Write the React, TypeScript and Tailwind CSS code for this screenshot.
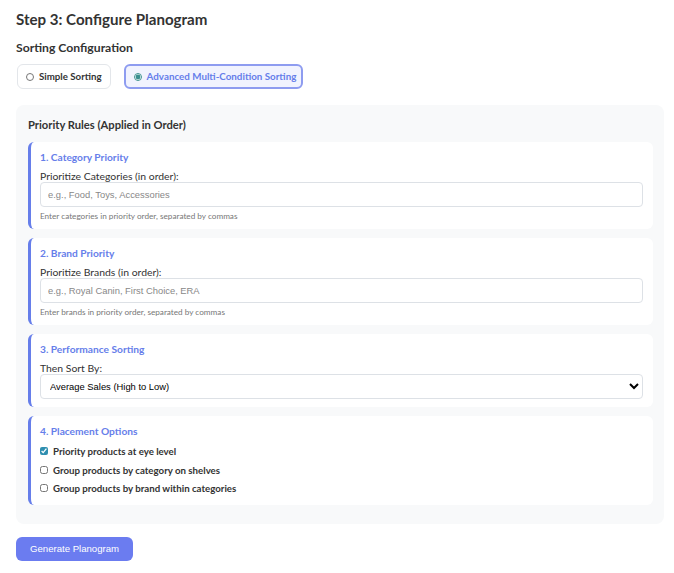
import { useState } from "react";

const sans = { fontFamily: 'Lato, "Open Sans", sans-serif' };
const arial = { fontFamily: '"Liberation Sans", Arial, sans-serif' };

function RuleCard({ title, children }: { title: string; children: React.ReactNode }) {
  return (
    <div className="bg-white rounded-md border-l-[3px] border-[#667eea] pl-[9px] pr-[10px] pt-[8px] pb-[8px]">
      <h4 className="text-[10.2px] font-bold text-[#667eea] leading-[14px] mb-[6px]">{title}</h4>
      {children}
    </div>
  );
}

function TextRule({ label, placeholder, hint }: { label: string; placeholder: string; hint: string }) {
  return (
    <>
      <label className="block text-[10.4px] text-[#333] leading-[12px]">{label}</label>
      <input
        type="text"
        placeholder={placeholder}
        className="block w-full h-[25px] border border-[#dde1e6] rounded px-[7px] text-[9.4px] placeholder:text-[#888] outline-none"
        style={arial}
      />
      <p className="text-[8.2px] text-[#777] mt-[4px] leading-[10px]">{hint}</p>
    </>
  );
}

export default function App() {
  const [mode, setMode] = useState("advanced");
  const [checks, setChecks] = useState([true, false, false]);
  const options = [
    "Priority products at eye level",
    "Group products by category on shelves",
    "Group products by brand within categories",
  ];

  return (
    <div className="bg-white min-h-screen pl-4 pr-[10px] pt-[9px] text-[#333]" style={sans}>
      <h2 className="text-[15.1px] font-bold text-[#333] leading-5">Step 3: Configure Planogram</h2>

      <h3 className="text-[12.2px] font-bold text-[#333] mt-[11px] leading-4">Sorting Configuration</h3>
      <div className="flex gap-[13px] mt-[8px] pl-[1px]">
        <label
          className={`flex items-center gap-[5px] h-[25px] pl-[8px] pr-[8px] rounded-md text-[9.7px] font-bold cursor-pointer ${
            mode === "simple" ? "border-2 border-[#8e9cf0] bg-[#f1f3fe] text-[#667eea]" : "border border-[#e3e6ea] bg-white text-[#333]"
          }`}
        >
          <input type="radio" name="sort" className="w-[8px] h-[8px] accent-[#3a8f8f]" checked={mode === "simple"} onChange={() => setMode("simple")} />
          Simple Sorting
        </label>
        <label
          className={`flex items-center gap-[5px] h-[25px] pl-[8px] pr-[5px] rounded-md text-[9.8px] font-bold cursor-pointer ${
            mode === "advanced" ? "border-2 border-[#8e9cf0] bg-[#f1f3fe] text-[#667eea]" : "border border-[#e3e6ea] bg-white text-[#333]"
          }`}
        >
          <input type="radio" name="sort" className="w-[8px] h-[8px] accent-[#3a8f8f]" checked={mode === "advanced"} onChange={() => setMode("advanced")} />
          Advanced Multi-Condition Sorting
        </label>
      </div>

      <div className="bg-[#f8f9fa] rounded-lg mt-[16px] pl-3 pr-[11px] pt-[12px] pb-[19px]">
        <h4 className="text-[11.2px] font-bold text-[#333] leading-4 mb-[9px]">Priority Rules (Applied in Order)</h4>
        <div className="flex flex-col gap-[9px]">
          <RuleCard title="1. Category Priority">
            <TextRule
              label="Prioritize Categories (in order):"
              placeholder="e.g., Food, Toys, Accessories"
              hint="Enter categories in priority order, separated by commas"
            />
          </RuleCard>
          <RuleCard title="2. Brand Priority">
            <TextRule
              label="Prioritize Brands (in order):"
              placeholder="e.g., Royal Canin, First Choice, ERA"
              hint="Enter brands in priority order, separated by commas"
            />
          </RuleCard>
          <RuleCard title="3. Performance Sorting">
            <label className="block text-[10.4px] text-[#333] leading-[12px]">Then Sort By:</label>
            <select
              className="block w-full h-[25px] border border-[#dde1e6] rounded px-[5px] text-[9.4px] text-black bg-white outline-none"
              style={arial}
              defaultValue="avg"
            >
              <option value="avg">Average Sales (High to Low)</option>
              <option value="total">Total Sales (High to Low)</option>
              <option value="margin">Margin (High to Low)</option>
            </select>
          </RuleCard>
          <RuleCard title="4. Placement Options">
            <div className="flex flex-col gap-[4.5px] pb-[2px]">
              {options.map((o, i) => (
                <label key={o} className="flex items-center gap-[5px] text-[9.7px] font-bold text-[#333] leading-[14px]">
                  <input
                    type="checkbox"
                    className="w-[8px] h-[8px] accent-[#2f8fb0]"
                    checked={checks[i]}
                    onChange={() => setChecks(checks.map((c, j) => (j === i ? !c : c)))}
                  />
                  {o}
                </label>
              ))}
            </div>
          </RuleCard>
        </div>
      </div>

      <button className="mt-[13px] h-[24px] px-[14px] rounded-md bg-[#6b7cf0] text-white text-[9.6px]" style={arial}>
        Generate Planogram
      </button>
    </div>
  );
}
